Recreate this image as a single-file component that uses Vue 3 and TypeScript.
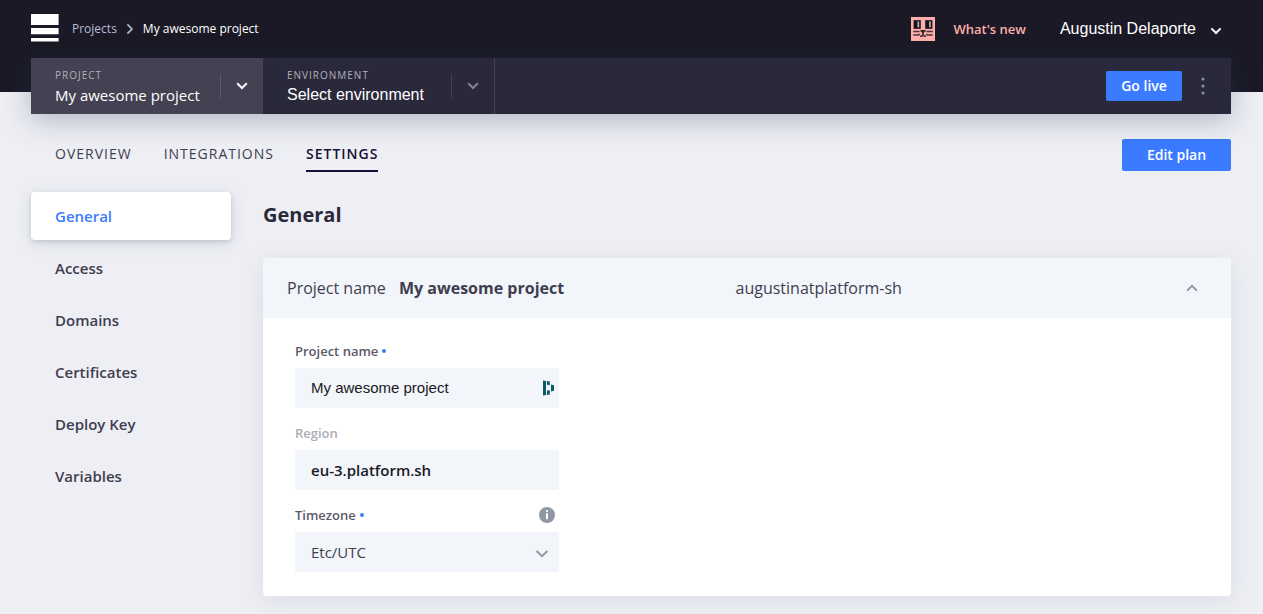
<script setup lang="ts">
import { ref } from 'vue'

const tabs = ['Overview', 'Integrations', 'Settings']
const activeTab = ref('Settings')

const sections = ['General', 'Access', 'Domains', 'Certificates', 'Deploy Key', 'Variables']
const activeSection = ref('General')

const projectName = ref('My awesome project')
const region = ref('eu-3.platform.sh')
const timezone = ref('Etc/UTC')
const expanded = ref(true)
</script>

<template>
  <div class="page">
    <header class="masthead">
      <a class="logo" href="#" aria-label="Home">
        <svg width="28" height="28" viewBox="0 0 28 28" fill="#fff">
          <path d="M0 0h27.6v11H0zM0 14h27.6v6.2H0zM0 24h27.6v3.6H0z" />
        </svg>
      </a>
      <nav class="crumbs" aria-label="Breadcrumb">
        <a href="#" class="crumb-link">Projects</a>
        <svg width="8" height="12" viewBox="0 0 8 12" fill="none" stroke="#b5bdd9" stroke-width="1.6">
          <path d="M1.4 1.4 6 6 1.4 10.6" />
        </svg>
        <span class="crumb-current">My awesome project</span>
      </nav>
      <div class="account">
        <a href="#" class="news">
          <svg width="24" height="24" viewBox="0 0 24 24">
            <path fill="#ffafab" d="M0 0h24v24H0z" />
            <path fill="#6b4a4f" d="M2.400 3h7.600v9H2.400zM14 3h7.600v9H14z" />
            <path fill="#14131c" d="M3 3.400h6.400v8H3zM14.600 3.400H21v8h-6.400z" />
            <path fill="#b9aeac" d="M6.400 4.400h1.800v5.800H6.400zM18 4.400h1.800v5.800H18z" />
            <path fill="#2c2229" d="M9.400 13h5.200v1.800h-1.500v2h-2.200v-2H9.400z" />
            <path fill="none" stroke="#4a343b" stroke-width="1.500" d="M2.200 14.600h6.400M21.800 14.600h-6.400M2.200 18h5.400l1.400-.8M21.800 18h-5.400l-1.400-.8M9 19.200h1.800l1.200-1.800 1.200 1.800H15" />
          </svg>
          <span>What's new</span>
        </a>
        <button type="button" class="user">
          <span>Augustin Delaporte</span>
          <svg width="12" height="8" viewBox="0 0 12 8" fill="none" stroke="#fff" stroke-width="2">
            <path d="M1.4 1.4 6 6l4.600-4.600" />
          </svg>
        </button>
      </div>
    </header>

    <div class="context-bar">
      <div class="context context-project">
        <div class="context-text">
          <span class="context-label">Project</span>
          <a href="#" class="context-value">My awesome project</a>
        </div>
        <button type="button" class="context-toggle" aria-label="Switch project">
          <svg width="12" height="8" viewBox="0 0 12 8" fill="none" stroke="#fff" stroke-width="2">
            <path d="M1.200 1.200 6 6l4.800-4.800" />
          </svg>
        </button>
      </div>
      <div class="context context-env">
        <div class="context-text">
          <span class="context-label">Environment</span>
          <button type="button" class="context-value env-value">Select environment</button>
        </div>
        <button type="button" class="context-toggle" aria-label="Switch environment">
          <svg width="12" height="8" viewBox="0 0 12 8" fill="none" stroke="#858391" stroke-width="2">
            <path d="M1.200 1.200 6 6l4.800-4.800" />
          </svg>
        </button>
      </div>
      <div class="bar-actions">
        <button type="button" class="primary go-live">Go live</button>
        <button type="button" class="more" aria-label="More actions">
          <svg width="4" height="18" viewBox="0 0 4 18" fill="#8a8d9e">
            <circle cx="2" cy="2" r="1.600" />
            <circle cx="2" cy="9" r="1.600" />
            <circle cx="2" cy="16" r="1.600" />
          </svg>
        </button>
      </div>
    </div>

    <div class="tab-row">
      <nav class="tabs">
        <a
          v-for="tab in tabs"
          :key="tab"
          href="#"
          class="tab"
          :class="{ active: tab === activeTab }"
          @click.prevent="activeTab = tab"
        >{{ tab }}</a>
      </nav>
      <button type="button" class="primary edit-plan">Edit plan</button>
    </div>

    <div class="content">
      <nav class="sidebar">
        <a
          v-for="section in sections"
          :key="section"
          href="#"
          class="side-link"
          :class="{ active: section === activeSection }"
          @click.prevent="activeSection = section"
        >{{ section }}</a>
      </nav>

      <main class="main">
        <h1>General</h1>
        <section class="card">
          <div class="card-head">
            <p>Project name <strong>{{ projectName }}</strong></p>
            <p>augustinatplatform-sh</p>
            <button type="button" aria-label="Toggle section" :aria-expanded="expanded" @click="expanded = !expanded">
              <svg width="12" height="8" viewBox="0 0 12 8" fill="none" stroke="#8f98a3" stroke-width="2">
                <path d="M1.200 6.600 6 1.800l4.800 4.800" />
              </svg>
            </button>
          </div>
          <form v-if="expanded" class="card-body" @submit.prevent>
            <div class="field">
              <label for="name" class="required">Project name</label>
              <div class="control">
                <input id="name" v-model="projectName" type="text" class="name-input" />
                <svg class="control-icon name-icon" width="12" height="16" viewBox="0 0 12 16" fill="#0e5a68">
                  <path d="M0 .4 3 1v14l-3 .6zM4 1l2.800.6v3.600L4 4.800zM4 10.600l2.800-.4v4.200L4 15zM8 4.400l3 .8v5.600l-3 .8z" />
                </svg>
              </div>
            </div>
            <div class="field">
              <label for="region" class="muted">Region</label>
              <div class="control">
                <input id="region" :value="region" type="text" class="region-input" readonly />
              </div>
            </div>
            <div class="field">
              <div class="label-row">
                <label for="timezone" class="required">Timezone</label>
                <button type="button" class="info" aria-label="About the timezone">
                  <svg width="16" height="16" viewBox="0 0 16 16">
                    <circle cx="8" cy="8" r="8" fill="#8f98a3" />
                    <path fill="#fff" d="M7 3.200h2v1.800H7zM7 6.200h2v6H7z" />
                  </svg>
                </button>
              </div>
              <div class="control">
                <select id="timezone" v-model="timezone">
                  <option>Etc/UTC</option>
                  <option>Europe/Paris</option>
                </select>
                <svg class="control-icon select-icon" width="14" height="8" viewBox="0 0 14 8" fill="none" stroke="#8f98a3" stroke-width="2">
                  <path d="M1.600 1 7 6.200 12.400 1" />
                </svg>
              </div>
            </div>
          </form>
        </section>
      </main>
    </div>
  </div>
</template>

<style>
body {
  margin: 0;
  background: #eeeff4;
}
</style>

<style scoped>
.page {
  box-sizing: border-box;
  min-height: 100vh;
  padding-bottom: 18px;
  background: #eeeff4;
  color: #3f3d50;
  font-family: 'Open Sans', 'Noto Sans', sans-serif;
  font-size: 15px;
}

.page *,
.page *::before,
.page *::after {
  box-sizing: border-box;
}

a {
  color: inherit;
  text-decoration: none;
}

button {
  margin: 0;
  padding: 0;
  border: 0;
  background: none;
  color: inherit;
  font: inherit;
  cursor: pointer;
}

svg {
  display: block;
}

.masthead {
  display: flex;
  align-items: center;
  height: 92px;
  padding: 0 41px 36px 31px;
  background: #1a1925;
}

.crumbs {
  display: flex;
  align-items: center;
  gap: 9px;
  margin: 2px 0 0 13px;
  font-size: 12px;
  line-height: 18px;
}

.crumb-link {
  color: #b5bdd9;
}

.crumb-current {
  color: #fff;
}

.account {
  display: flex;
  align-items: center;
  gap: 34px;
  margin: 2px 0 0 auto;
}

.news {
  display: flex;
  align-items: center;
  gap: 18px;
  color: #ffafab;
  font-size: 13px;
  font-weight: 600;
}

.user {
  display: flex;
  align-items: center;
  gap: 14px;
  color: #fff;
  font-family: 'Liberation Sans', Arial, sans-serif;
  font-size: 16px;
}

.user svg {
  margin-top: 4px;
}

.context-bar {
  position: relative;
  display: flex;
  height: 56px;
  margin: -34px 32px 0 31px;
  background: #2a293b;
  box-shadow: 0 6px 28px rgba(42, 62, 98, 0.32);
}

.context {
  display: flex;
  align-items: center;
  width: 232px;
  padding-left: 24px;
}

.context-project {
  background: #434152;
}

.context-env {
  border-right: 1px solid #434152;
}

.context-text {
  display: flex;
  flex: 1;
  flex-direction: column;
  align-items: flex-start;
  padding-top: 2px;
}

.context-label {
  color: #b1afb9;
  font-size: 10px;
  line-height: 16px;
  letter-spacing: 1px;
  text-transform: uppercase;
}

.context-value {
  color: #fff;
  font-size: 15px;
  line-height: 24px;
  white-space: nowrap;
}

.env-value {
  font-family: 'Liberation Sans', Arial, sans-serif;
  font-size: 16px;
}

.context-toggle {
  display: flex;
  align-items: center;
  justify-content: center;
  width: 43px;
  height: 24px;
  border-left: 1px solid #5b5968;
}

.context-env .context-toggle {
  border-left-color: #434152;
}

.bar-actions {
  display: flex;
  align-items: center;
  gap: 19px;
  margin-left: auto;
  padding-right: 26px;
}

.primary {
  padding-bottom: 2px;
  border-radius: 2px;
  background: #3a7bff;
  color: #fff;
  font-size: 14px;
  font-weight: 600;
}

.go-live {
  width: 76px;
  height: 30px;
}

.tab-row {
  display: flex;
  align-items: flex-start;
  justify-content: space-between;
  margin: 25px 32px 0 55px;
}

.tabs {
  display: flex;
  gap: 32px;
}

.tab {
  height: 33px;
  font-size: 14px;
  line-height: 30px;
  letter-spacing: 1px;
  text-transform: uppercase;
}

.tab.active {
  border-bottom: 2px solid #1a0f37;
  color: #1a0f37;
  font-weight: 600;
}

.edit-plan {
  width: 109px;
  height: 32px;
}

.content {
  display: flex;
  gap: 32px;
  margin: 20px 32px 0 31px;
}

.sidebar {
  display: flex;
  flex: none;
  flex-direction: column;
  gap: 4px;
  width: 200px;
}

.side-link {
  height: 48px;
  padding-left: 24px;
  border-radius: 4px;
  font-size: 15px;
  font-weight: 600;
  line-height: 48px;
}

.side-link.active {
  background: #fff;
  color: #3a7bff;
  box-shadow: 0 2px 4px rgba(63, 61, 80, 0.16), 0 3px 16px rgba(75, 97, 128, 0.16);
}

.main {
  flex: 1;
  min-width: 0;
}

h1 {
  margin: 8px 0 28px;
  color: #2a293b;
  font-size: 20px;
  font-weight: 700;
  line-height: 30px;
}

.card {
  border-radius: 4px;
  background: #fff;
  box-shadow: 0 4px 24px rgba(75, 97, 128, 0.12);
}

.card-head {
  display: grid;
  grid-template-columns: 1fr 1fr 16px;
  align-items: center;
  height: 60px;
  padding: 0 31px 0 24px;
  border-radius: 4px 4px 0 0;
  background: #f2f5f9;
  font-size: 16px;
}

.card-head p {
  margin: 0;
}

.card-head strong {
  margin-left: 9px;
}

.card-head button {
  display: flex;
  justify-content: center;
}

.card-body {
  display: flex;
  flex-direction: column;
  gap: 16px;
  padding: 24px 32px;
}

.field {
  display: flex;
  flex-direction: column;
  gap: 8px;
  width: 264px;
}

label {
  display: flex;
  align-items: center;
  gap: 4px;
  color: #5b596a;
  font-size: 13px;
  font-weight: 600;
  line-height: 18px;
}

label.muted {
  color: #adacb5;
}

label.required::after {
  width: 4px;
  height: 4px;
  border-radius: 50%;
  background: #3a7bff;
  content: '';
}

.label-row {
  display: flex;
  align-items: center;
  justify-content: space-between;
  padding-right: 4px;
}

.control {
  position: relative;
}

input,
select {
  display: block;
  width: 100%;
  height: 40px;
  margin: 0;
  padding: 0 16px;
  border: 0;
  border-radius: 2px;
  outline: 0;
  background: #f2f5f9;
  color: #1a1925;
  font: inherit;
  appearance: none;
}

.name-input {
  padding-bottom: 2px;
  font-family: 'Liberation Sans', Arial, sans-serif;
}

.region-input {
  font-weight: 600;
}

select {
  color: #3f3d50;
}

.control-icon {
  position: absolute;
  top: 50%;
  pointer-events: none;
}

.name-icon {
  right: 4px;
  margin-top: -8px;
}

.select-icon {
  right: 10px;
  margin-top: -2px;
}
</style>
